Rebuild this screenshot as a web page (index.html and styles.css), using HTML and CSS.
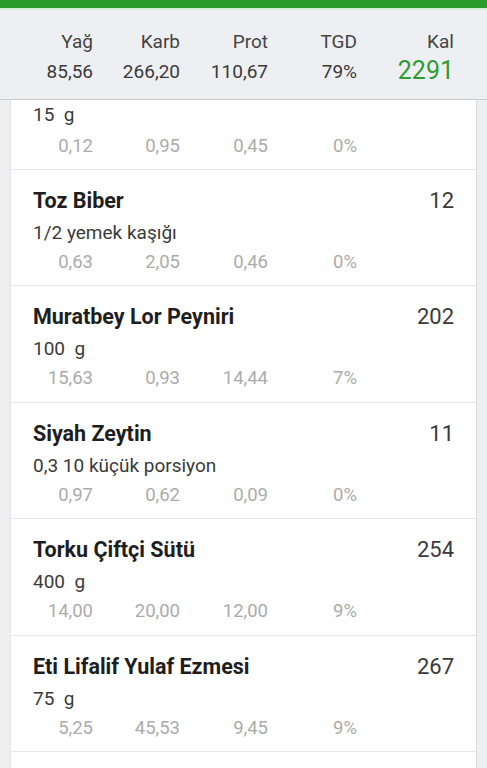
FILE: index.html
```html
<!DOCTYPE html>
<html lang="tr">
<head>
  <meta charset="UTF-8">
  <meta name="viewport" content="width=device-width, initial-scale=1.0">
  <title>Günlük</title>
  <link rel="stylesheet" href="styles.css">
</head>
<body>
  <div class="status-bar"></div>

  <div class="totals">
    <div class="total">
      <span class="label">Yağ</span>
      <span class="value">85,56</span>
    </div>
    <div class="total">
      <span class="label">Karb</span>
      <span class="value">266,20</span>
    </div>
    <div class="total">
      <span class="label">Prot</span>
      <span class="value">110,67</span>
    </div>
    <div class="total">
      <span class="label">TGD</span>
      <span class="value">79%</span>
    </div>
    <div class="total kal">
      <span class="label">Kal</span>
      <span class="value">2291</span>
    </div>
  </div>

  <div class="card">
    <!-- first row is scrolled under the header -->
    <div class="food cut">
      <div class="amount">15&nbsp; g</div>
      <div class="macros">
        <span>0,12</span><span>0,95</span><span>0,45</span><span>0%</span>
      </div>
    </div>

    <div class="food">
      <div class="food-head">
        <span class="name">Toz Biber</span>
        <span class="cal">12</span>
      </div>
      <div class="amount">1/2 yemek kaşığı</div>
      <div class="macros">
        <span>0,63</span><span>2,05</span><span>0,46</span><span>0%</span>
      </div>
    </div>

    <div class="food">
      <div class="food-head">
        <span class="name">Muratbey Lor Peyniri</span>
        <span class="cal">202</span>
      </div>
      <div class="amount">100&nbsp; g</div>
      <div class="macros">
        <span>15,63</span><span>0,93</span><span>14,44</span><span>7%</span>
      </div>
    </div>

    <div class="food">
      <div class="food-head">
        <span class="name">Siyah Zeytin</span>
        <span class="cal">11</span>
      </div>
      <div class="amount">0,3 10 küçük porsiyon</div>
      <div class="macros">
        <span>0,97</span><span>0,62</span><span>0,09</span><span>0%</span>
      </div>
    </div>

    <div class="food">
      <div class="food-head">
        <span class="name">Torku Çiftçi Sütü</span>
        <span class="cal">254</span>
      </div>
      <div class="amount">400&nbsp; g</div>
      <div class="macros">
        <span>14,00</span><span>20,00</span><span>12,00</span><span>9%</span>
      </div>
    </div>

    <div class="food">
      <div class="food-head">
        <span class="name">Eti Lifalif Yulaf Ezmesi</span>
        <span class="cal">267</span>
      </div>
      <div class="amount">75&nbsp; g</div>
      <div class="macros">
        <span>5,25</span><span>45,53</span><span>9,45</span><span>9%</span>
      </div>
    </div>
  </div>
</body>
</html>
```

FILE: styles.css
```css
body {
  margin: 0;
  width: 487px;
  height: 768px;
  overflow: hidden;
  display: flex;
  flex-direction: column;
  background-color: #eeeff1;
  font-family: Roboto, "Noto Sans", sans-serif;
  color: #333;
}

.status-bar {
  flex: none;
  height: 8px;
  background-color: #2a9a2a;
  border-bottom: 2px solid #d6eed6;
}

.totals {
  flex: none;
  display: grid;
  grid-template-columns: 93px 87px 88px 89px 97px;
  height: 90px;
  box-sizing: border-box;
  padding-top: 18px;
  background-color: #eeeff2;
  border-bottom: 1px solid #c9c9cb;
}

.total {
  display: flex;
  flex-direction: column;
  align-items: flex-end;
}

.total .label {
  font-size: 19px;
  line-height: 28px;
  color: #444;
}

.total .value {
  font-size: 19px;
  line-height: 32px;
  color: #3a3a3a;
}

.total.kal .value {
  font-size: 25px;
  line-height: 30px;
  color: #2e9c32;
}

.card {
  flex: 1;
  margin: 0 10px;
  background-color: #fff;
  border-right: 1px solid #dcdcde;
  border-left: 1px solid #e4e4e6;
}

.food {
  height: 116.4px;
  box-sizing: border-box;
  padding: 17px 22px 0 22px;
  border-bottom: 1px solid #e8e8e8;
}

.food.cut {
  height: 70px;
  padding-top: 0;
}

.food-head {
  display: flex;
  justify-content: space-between;
  align-items: baseline;
  height: 28px;
  margin-bottom: 2px;
}

.name {
  font-size: 21.5px;
  line-height: 28px;
  font-weight: bold;
  color: #1e1e1e;
}

.cal {
  font-size: 22px;
  line-height: 28px;
  color: #3a3a3a;
}

.amount {
  font-size: 19px;
  line-height: 31px;
  color: #3a3a3a;
}

.macros {
  display: grid;
  grid-template-columns: 82px 87px 88px 89px;
  margin-left: -22px;
  font-size: 18.5px;
  line-height: 29px;
  color: #ababab;
  text-align: right;
}

.cut .amount {
  line-height: 30px;
}

.cut .macros {
  line-height: 32px;
}
```
